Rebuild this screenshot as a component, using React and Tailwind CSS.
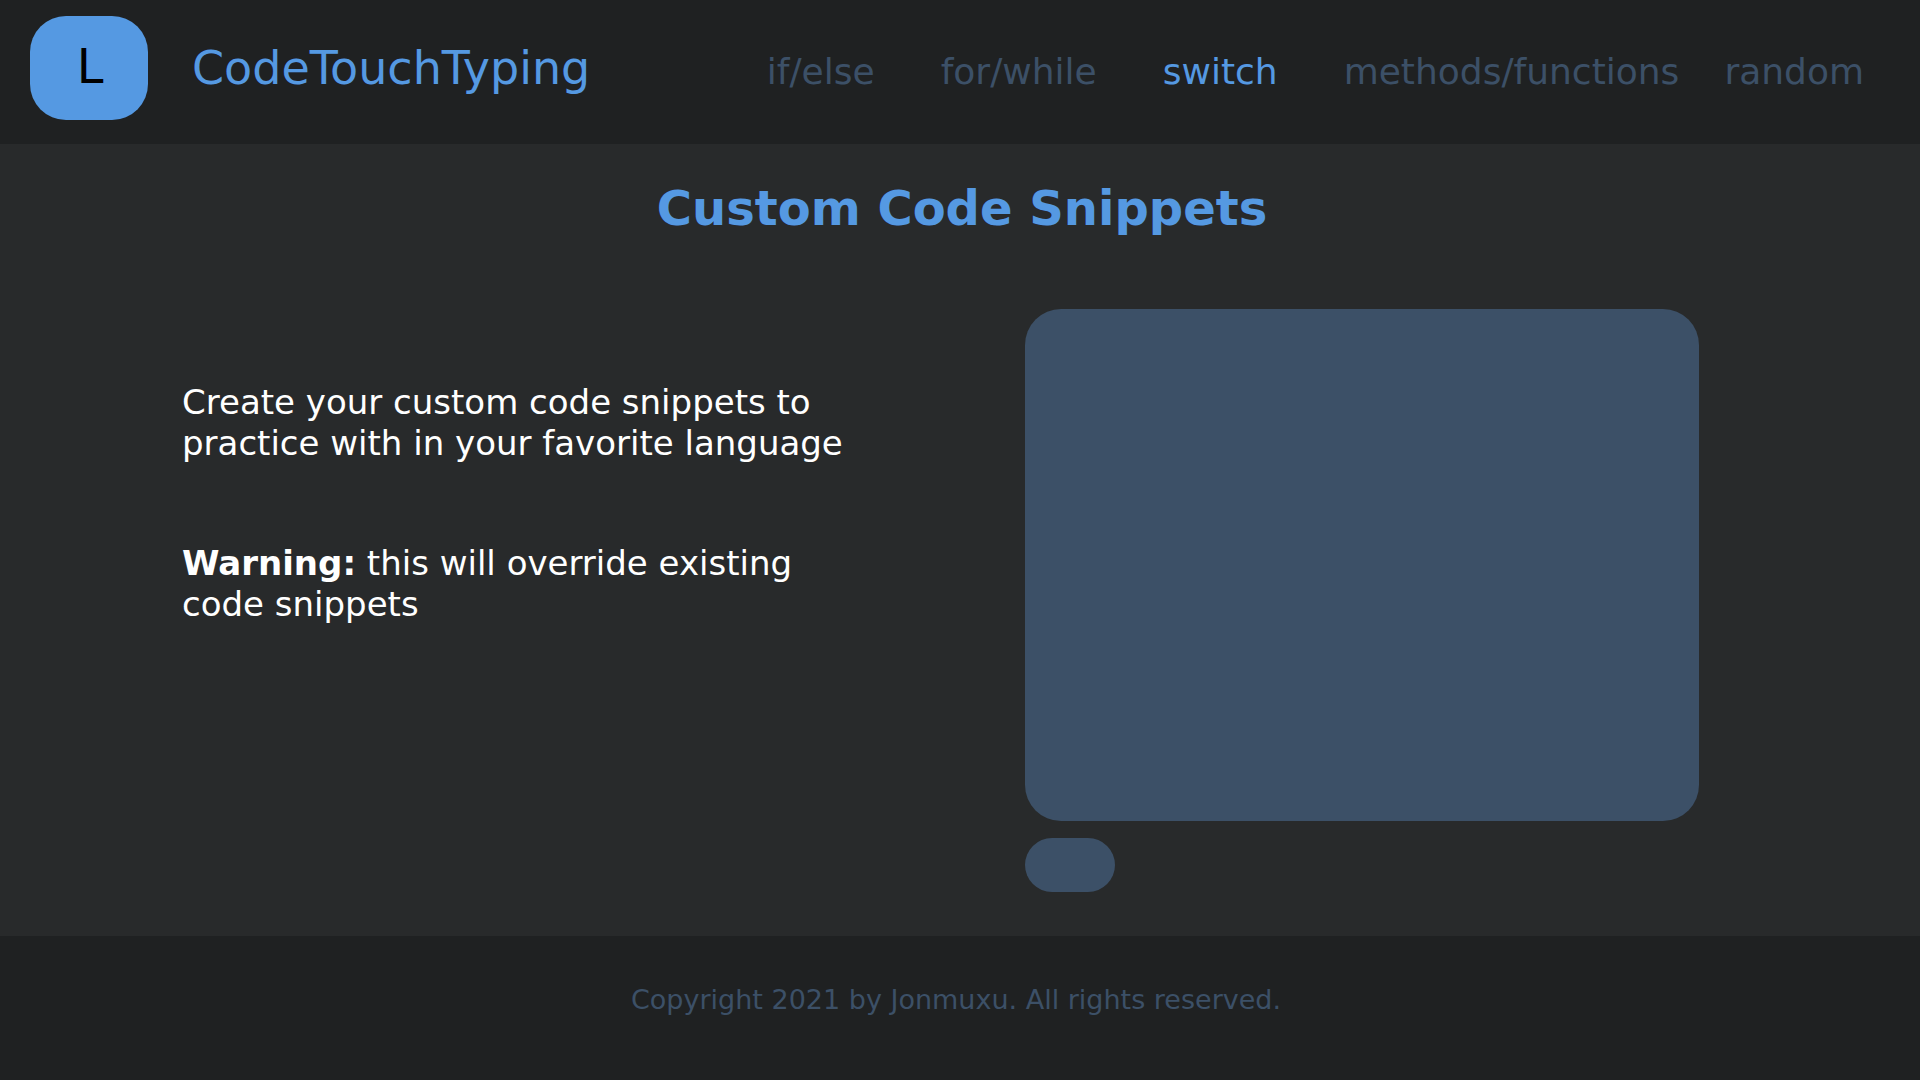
const links = [
  { label: "if/else", pad: "mr-[66px]" },
  { label: "for/while", pad: "mr-[66px]" },
  { label: "switch", pad: "mr-[66px]", active: true },
  { label: "methods/functions", pad: "mr-[45px]" },
  { label: "random", pad: "" },
];

export default function App() {
  return (
    <div className="flex min-h-screen flex-col bg-[#282a2b] font-['DejaVu_Sans',sans-serif]">
      <header className="flex h-36 items-center bg-[#1f2122] pr-14 pl-[30px]">
        <a href="#home" aria-label="Home" className="mb-2 flex h-[104px] w-[118px] items-center justify-center rounded-[36px] bg-[#5599e2] pb-1 pl-0.5 text-5xl text-black">
          L
        </a>
        <span className="ml-11 pb-2 text-[46px] text-[#5599e2]">CodeTouchTyping</span>
        <nav className="ml-auto flex text-4xl">
          {links.map((l) => (
            <a key={l.label} href={"#" + l.label} className={l.pad + (l.active ? " text-[#5599e2]" : " text-[#3c5067]")}>
              {l.label}
            </a>
          ))}
        </nav>
      </header>
      <main className="flex flex-1 flex-col">
        <h1 className="pt-9 pl-1 text-center text-5xl leading-[56px] font-bold text-[#5599e2]">Custom Code Snippets</h1>
        <div className="flex justify-between pt-[73px] pr-[221px] pl-[182px]">
          <div className="w-[680px] pt-[73px] text-[34px] leading-[41px] text-white">
            <p>Create your custom code snippets to practice with in your favorite language</p>
            <p className="pt-[79px]">
              <strong>Warning:</strong> this will override existing code snippets
            </p>
          </div>
          <div className="flex w-[674px] flex-col gap-[17px]">
            <textarea aria-label="Code snippet" className="block h-[512px] resize-none rounded-[36px] bg-[#3c5067] p-8 text-2xl text-white outline-none" />
            <button type="button" aria-label="Save snippet" className="h-[54px] w-[90px] rounded-[27px] bg-[#3c5067]" />
          </div>
        </div>
      </main>
      <footer className="flex h-36 items-center justify-center bg-[#1f2122] pr-2 pb-4 text-[27px] text-[#3c5067]">
        Copyright 2021 by Jonmuxu. All rights reserved.
      </footer>
    </div>
  );
}
